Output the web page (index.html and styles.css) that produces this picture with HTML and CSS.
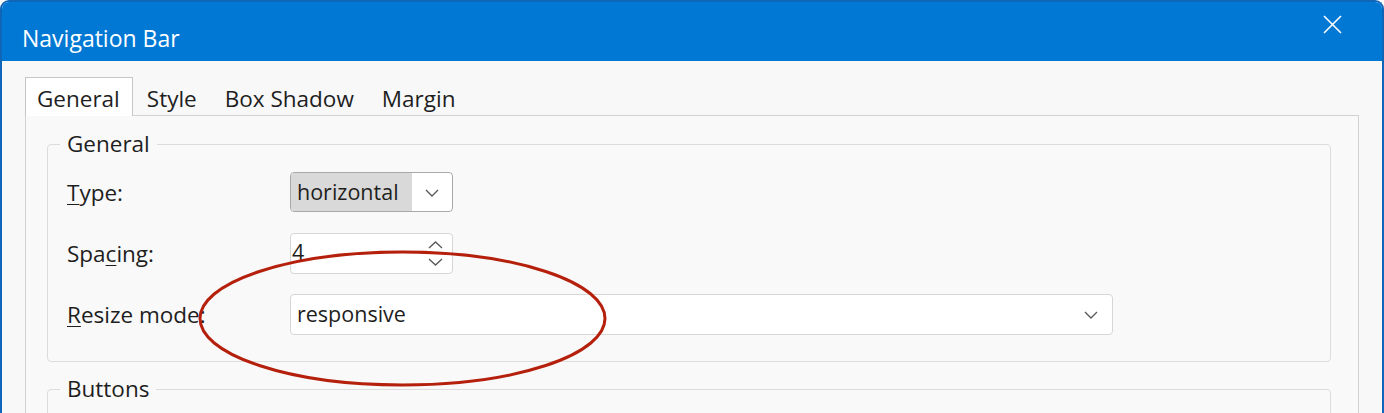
FILE: index.html
```html
<!DOCTYPE html>
<html>
<head>
<meta charset="utf-8">
<link rel="stylesheet" href="styles.css">
</head>
<body>
<div class="window">
  <div class="titlebar">
    <span class="title">Navigation Bar</span>
    <svg class="close" width="19" height="19" viewBox="0 0 19 19"><path d="M1 1 L18 18 M18 1 L1 18" stroke="#fff" stroke-width="1.6" fill="none"/></svg>
  </div>
  <div class="content">
    <div class="tabs">
      <div class="tab selected">General</div>
      <div class="tab">Style</div>
      <div class="tab">Box Shadow</div>
      <div class="tab">Margin</div>
    </div>
    <div class="panel">
      <fieldset class="group">
        <legend>General</legend>
        <div class="rows">
          <div class="row">
            <span class="label"><u>T</u>ype:</span>
            <div class="combo focused small">
              <span class="value sel">horizontal</span>
              <span class="arrow"><svg width="14" height="8" viewBox="0 0 14 8"><path d="M1 1 L7 7 L13 1" stroke="#5a5a5a" stroke-width="1.4" fill="none"/></svg></span>
            </div>
          </div>
          <div class="row">
            <span class="label">Spa<u>c</u>ing:</span>
            <div class="spin small">
              <span class="num">4</span>
              <span class="spinbtns">
                <svg width="15" height="8" viewBox="0 0 15 8"><path d="M1 7 L7.5 1 L14 7" stroke="#5a5a5a" stroke-width="1.4" fill="none"/></svg>
                <svg width="15" height="8" viewBox="0 0 15 8"><path d="M1 1 L7.5 7 L14 1" stroke="#5a5a5a" stroke-width="1.4" fill="none"/></svg>
              </span>
            </div>
          </div>
          <div class="row">
            <span class="label"><u>R</u>esize mode:</span>
            <div class="combo wide">
              <span class="value">responsive</span>
              <span class="arrow"><svg width="14" height="8" viewBox="0 0 14 8"><path d="M1 1 L7 7 L13 1" stroke="#5a5a5a" stroke-width="1.4" fill="none"/></svg></span>
            </div>
          </div>
        </div>
      </fieldset>
      <fieldset class="group buttons">
        <legend>Buttons</legend>
      </fieldset>
    </div>
  </div>
</div>
<svg class="annotation" width="1384" height="413" viewBox="0 0 1384 413">
  <ellipse cx="402.5" cy="318.5" rx="202.5" ry="66.5" fill="none" stroke="#b5200c" stroke-width="3"/>
</svg>
</body>
</html>
```
FILE: styles.css
```css
html, body {
  margin: 0;
  padding: 0;
  background: #ffffff;
  overflow: hidden;
}
body {
  width: 1384px;
  height: 413px;
  position: relative;
  font-family: "Open Sans", "Noto Sans", "Liberation Sans", sans-serif;
  color: #1e1e1e;
}
.window {
  box-sizing: border-box;
  width: 1384px;
  height: 413px;
  border: 2px solid #0f65b8;
  border-bottom: none;
  border-radius: 9px 9px 0 0;
  background: #f8f8f8;
  overflow: hidden;
}
.titlebar {
  height: 59px;
  background: #0078d4;
  display: flex;
  align-items: center;
  justify-content: space-between;
  padding: 0 40px 0 20px;
}
.title {
  color: #ffffff;
  font-size: 23px;
  margin-top: 12px;
}
.close {
  display: block;
  margin-top: -14px;
}
.content {
  padding: 16px 23px 0 23px;
}
.tabs {
  display: flex;
  height: 39px;
  position: relative;
  z-index: 1;
  margin-bottom: -1px;
}
.tab {
  display: flex;
  align-items: center;
  padding: 3px 13px 0 13px;
  font-size: 22.5px;
  color: #1e1e1e;
  border: 1px solid transparent;
  border-bottom: none;
}
.tab.selected {
  background: #ffffff;
  border-color: #c6c6c6;
  padding: 3px 12px 0 11px;
}
.panel {
  border: 1px solid #d2d2d2;
  background: #f9f9f9;
  height: 400px;
  padding: 15px 27px 0 21px;
}
.group {
  margin: 0;
  border: 1px solid #dcdcdc;
  border-radius: 4px;
  padding: 15px 0 26px 19px;
  min-width: 0;
}
.group legend {
  font-size: 22.5px;
  line-height: 26px;
  padding: 0 7px;
  margin-left: -7px;
  color: #1e1e1e;
}
.buttons {
  margin-top: 14px;
  height: 60px;
}
.rows {
  display: flex;
  flex-direction: column;
  gap: 20px;
}
.row {
  display: flex;
  align-items: center;
  height: 41px;
}
.label {
  width: 223px;
  font-size: 22.5px;
  color: #1e1e1e;
}
.label u {
  text-decoration-thickness: 1px;
  text-underline-offset: 3px;
}
.combo, .spin {
  box-sizing: border-box;
  height: 41px;
  border: 1px solid #d6d6d6;
  border-radius: 4px;
  background: #ffffff;
  display: flex;
  align-items: stretch;
  font-size: 21.5px;
}
.small {
  width: 163px;
}
.wide {
  width: 823px;
}
.combo.focused {
  border-color: #a9a9a9;
  height: 40px;
  margin-bottom: 1px;
}
.value {
  flex: 1;
  display: flex;
  align-items: center;
  padding: 0 0 2px 6px;
  color: #1e1e1e;
}
.value.sel {
  flex: none;
  width: 115px;
  background: #d9d9d9;
  border-radius: 3px 0 0 3px;
}
.arrow {
  display: flex;
  align-items: center;
  justify-content: center;
  width: 41px;
}
.focused .arrow {
  flex: 1;
  padding-top: 1px;
}
.wide .arrow {
  width: 42px;
  padding-right: 0;
}
.spin {
  justify-content: space-between;
}
.num {
  display: flex;
  align-items: center;
  padding: 0 0 4px 1px;
}
.spinbtns {
  display: flex;
  flex-direction: column;
  justify-content: center;
  gap: 9px;
  padding-right: 9px;
}
.spinbtns svg {
  display: block;
}
.annotation {
  position: absolute;
  left: 0;
  top: 0;
  pointer-events: none;
}
```
